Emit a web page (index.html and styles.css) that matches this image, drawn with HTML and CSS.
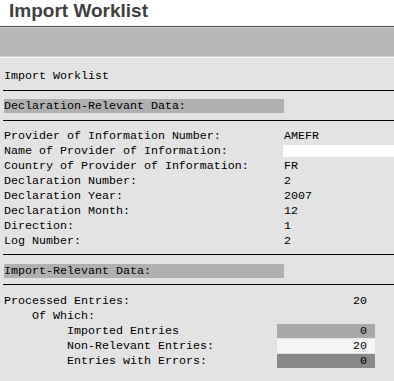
FILE: index.html
```html
<!DOCTYPE html>
<html>
<head>
<meta charset="utf-8">
<title>Import Worklist</title>
<link rel="stylesheet" href="styles.css">
</head>
<body>
<header class="titlebar">Import Worklist</header>
<div class="toolbar"></div>
<main class="content">
  <div class="line">Import Worklist</div>
  <hr class="rule rule-1">
  <div class="section-head">Declaration-Relevant Data:</div>
  <hr class="rule rule-2">
  <div class="fields">
    <div class="field"><span class="label">Provider of Information Number:</span><span class="value">AMEFR</span></div>
    <div class="field"><span class="label">Name of Provider of Information:</span><span class="value input"></span></div>
    <div class="field"><span class="label">Country of Provider of Information:</span><span class="value">FR</span></div>
    <div class="field"><span class="label">Declaration Number:</span><span class="value">2</span></div>
    <div class="field"><span class="label">Declaration Year:</span><span class="value">2007</span></div>
    <div class="field"><span class="label">Declaration Month:</span><span class="value">12</span></div>
    <div class="field"><span class="label">Direction:</span><span class="value">1</span></div>
    <div class="field"><span class="label">Log Number:</span><span class="value">2</span></div>
  </div>
  <hr class="rule rule-3">
  <div class="section-head section-head-2">Import-Relevant Data:</div>
  <hr class="rule rule-4">
  <div class="counts">
    <div class="count"><span class="label">Processed Entries:</span><span class="num">20</span></div>
    <div class="count"><span class="label indent-1">Of Which:</span><span></span></div>
    <div class="count"><span class="label indent-2">Imported Entries</span><span class="num box box-mid">0</span></div>
    <div class="count"><span class="label indent-2">Non-Relevant Entries:</span><span class="num box box-light">20</span></div>
    <div class="count"><span class="label indent-2">Entries with Errors:</span><span class="num box box-dark">0</span></div>
  </div>
</main>
</body>
</html>
```
FILE: styles.css
```css
html, body {
  margin: 0;
  padding: 0;
}
body {
  background: #e3e3e3;
  height: 381px;
  overflow: hidden;
}
.titlebar {
  background: #ffffff;
  height: 27px;
  box-sizing: border-box;
  border-bottom: 1px solid #4a4a4a;
  padding-left: 9px;
  font-family: "Liberation Sans", Arial, sans-serif;
  font-weight: bold;
  font-size: 19px;
  line-height: 22px;
  color: #3f3f3f;
}
.toolbar {
  height: 28px;
  background: #b8b8b8;
  border-top: 1px solid #d4d4d4;
  border-bottom: 1px solid #d2d2d2;
  box-shadow: 0 1px 0 #f6f6f6;
}
.content {
  padding: 12px 0 0 3px;
  font-family: "Liberation Mono", "DejaVu Sans Mono", monospace;
  font-size: 11.67px;
  line-height: 15px;
  color: #000;
}
.line {
  padding-left: 1px;
}
.rule {
  border: 0;
  height: 1px;
  background: #000;
  margin: 0;
}
.rule-1 { margin-top: 6px; }
.rule-2 { margin-top: 7px; }
.rule-3 { margin-top: 5px; }
.rule-4 { margin-top: 6px; }
.section-head {
  margin: 8px 0 0 1px;
  width: 280px;
  height: 14px;
  line-height: 14px;
  background: #b0b0b0;
}
.section-head-2 {
  margin-top: 9px;
}
.fields {
  margin-top: 8px;
  padding-left: 1px;
}
.field {
  display: grid;
  grid-template-columns: 280px 1fr;
  height: 15px;
}
.label {
  white-space: pre;
}
.value.input {
  background: #ffffff;
  margin: 1px 0 2px -1px;
}
.counts {
  margin-top: 9px;
  padding-left: 1px;
}
.count {
  display: grid;
  grid-template-columns: 273px 98px;
  height: 15px;
}
.indent-1 { padding-left: 28px; }
.indent-2 { padding-left: 63px; }
.num {
  text-align: right;
  padding-right: 8px;
}
.box {
  height: 14px;
  line-height: 14px;
}
.box-mid { background: #a9a9a9; }
.box-light { background: #f5f5f5; }
.box-dark { background: #888888; }
```
